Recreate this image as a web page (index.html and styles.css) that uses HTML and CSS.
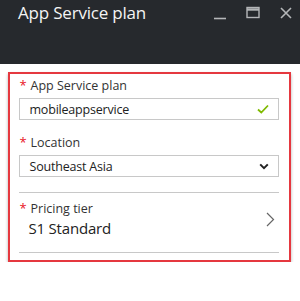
FILE: index.html
```html
<!DOCTYPE html>
<html lang="en">
<head>
    <meta charset="UTF-8">
    <title>App Service plan</title>
    <link rel="stylesheet" href="styles.css">
</head>
<body>
    <header class="blade-header">
        <h1 class="blade-title">App Service plan</h1>
        <div class="blade-controls">
            <svg class="ctl" width="14" height="14" viewBox="0 0 14 14"><path d="M1 12.5h12" stroke="#b4b6b8" stroke-width="1.6" fill="none"/></svg>
            <svg class="ctl" width="14" height="14" viewBox="0 0 14 14"><rect x="1" y="1.5" width="12" height="10" stroke="#b4b6b8" stroke-width="1.4" fill="none"/><path d="M1 3.5h12" stroke="#b4b6b8" stroke-width="2.4"/></svg>
            <svg class="ctl" width="14" height="14" viewBox="0 0 14 14"><path d="M2 2l10 10M12 2L2 12" stroke="#b4b6b8" stroke-width="1.6" fill="none"/></svg>
        </div>
    </header>

    <div class="panel">
        <div class="form-group">
            <label class="field-label"><span class="req">*</span>App Service plan</label>
            <div class="field">
                <span class="field-value">mobileappservice</span>
                <svg width="12" height="10" viewBox="0 0 12 10"><path d="M1 5.5l3.3 3L11 1.5" stroke="#7fba00" stroke-width="1.8" fill="none"/></svg>
            </div>
        </div>
        <div class="form-group">
            <label class="field-label"><span class="req">*</span>Location</label>
            <div class="field">
                <span class="field-value">Southeast Asia</span>
                <svg width="10" height="7" viewBox="0 0 10 7"><path d="M1.2 1.4L5 5.2l3.8-3.8" stroke="#222" stroke-width="2" fill="none"/></svg>
            </div>
        </div>
        <div class="picker">
            <div>
                <div class="field-label small"><span class="req">*</span>Pricing tier</div>
                <div class="picker-value">S1 Standard</div>
            </div>
            <svg width="9" height="15" viewBox="0 0 9 15"><path d="M1 1l6.5 6.5L1 14" stroke="#666" stroke-width="1.2" fill="none"/></svg>
        </div>
    </div>
</body>
</html>
```

FILE: styles.css
```css
body {
    margin: 0;
    padding: 0;
    background-color: #fff;
    font-family: "Open Sans", "Noto Sans", sans-serif;
    color: #222;
}

.blade-header {
    display: flex;
    justify-content: space-between;
    height: 64px;
    background-color: #26292d;
}

.blade-title {
    margin: 0;
    padding: 1px 0 0 18px;
    font-size: 17px;
    font-weight: normal;
    line-height: 24px;
    color: #f4f4f4;
    letter-spacing: -0.2px;
}

.blade-controls {
    display: flex;
    gap: 19px;
    padding: 6px 7px 0 0;
}

.ctl {
    display: block;
}

.panel {
    margin: 8px 9px 0 8px;
    border: 2.5px solid #e5383f;
    padding: 3px 10px 7px 8.5px;
    box-shadow: 0 2px 3px rgba(0, 0, 0, 0.3);
}

.form-group {
    margin-bottom: 14px;
}

.field-label {
    display: flex;
    font-size: 12.5px;
    line-height: 18px;
    height: 21px;
    color: #333;
}

.req {
    color: #e81123;
    width: 11px;
    padding-left: 1px;
    font-size: 13px;
    line-height: 16px;
}

.field {
    display: flex;
    align-items: center;
    justify-content: space-between;
    height: 20px;
    border: 1px solid #c8c8c8;
    padding: 0 9px 0 10px;
}

.field-value {
    font-size: 12.5px;
    color: #222;
    letter-spacing: -0.2px;
}

.picker {
    display: flex;
    justify-content: space-between;
    align-items: center;
    margin-top: 15px;
    border-top: 1px solid #c8c8c8;
    border-bottom: 1px solid #c8c8c8;
    padding: 7px 4px 14px 0;
}

.field-label.small {
    height: 18px;
}

.picker-value {
    padding-left: 10px;
    font-size: 15px;
    line-height: 20px;
    color: #222;
    letter-spacing: -0.2px;
}
```
